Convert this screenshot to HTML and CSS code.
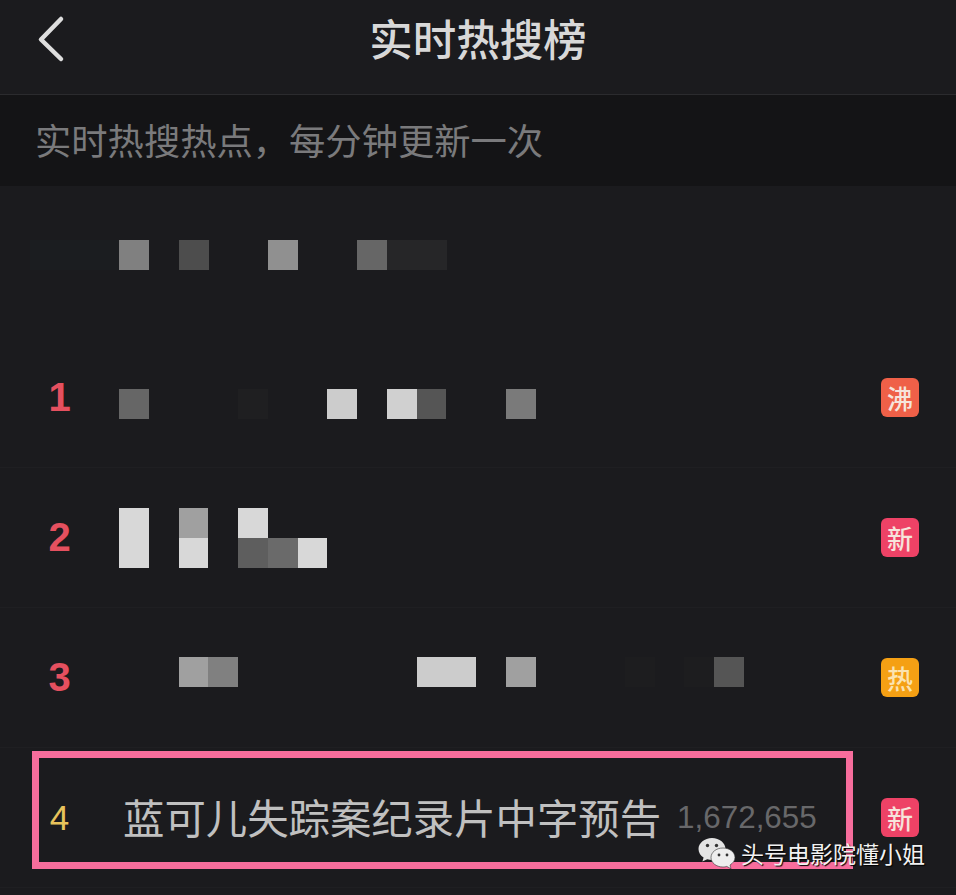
FILE: index.html
```html
<!DOCTYPE html>
<html lang="zh-CN">
  <head>
    <meta charset="UTF-8" />
    <meta name="viewport" content="width=device-width, initial-scale=1.0" />
    <title>实时热搜榜</title>
    <link rel="stylesheet" href="styles.css">
  </head>
  <body>
    <div class="page">
      <div class="header">
        <svg class="back" width="30" height="48" viewBox="0 0 30 48">
          <path d="M25 4 L5 24.5 L25 44" />
        </svg>
        <h1>实时热搜榜</h1>
      </div>

      <div class="notice">实时热搜热点，每分钟更新一次</div>

      <!-- pinned row, no rank -->
      <div class="row row-pinned">
        <div class="mosaic mosaic-pinned">
          <i class="t-blue"></i><i class="t-blue"></i><i class="t-blue"></i>
          <i class="t-808"></i><i></i><i class="t-4d"></i><i></i><i></i><i class="t-90"></i><i></i><i></i><i class="t-66"></i><i class="t-2a"></i><i class="t-2a"></i>
        </div>
      </div>

      <div class="row">
        <span class="rank">1</span>
        <div class="mosaic mosaic-low">
          <i class="t-66"></i><i></i><i></i><i></i><i class="t-21"></i><i></i><i></i><i class="t-cc"></i><i></i><i class="t-d0"></i><i class="t-55"></i><i></i><i></i><i class="t-7a"></i>
        </div>
        <span class="badge badge-boil">沸</span>
      </div>

      <div class="row">
        <span class="rank">2</span>
        <div class="mosaic mosaic-two">
          <i class="t-d8 tall"></i><i></i><i class="t-a0"></i><i></i><i class="t-d8"></i><i></i><i></i>
          <i></i><i class="t-d8"></i><i></i><i class="t-5e"></i><i class="t-6a"></i><i class="t-d8"></i>
        </div>
        <span class="badge badge-new">新</span>
      </div>

      <div class="row">
        <span class="rank">3</span>
        <div class="mosaic mosaic-high">
          <i></i><i></i><i class="t-a0"></i><i class="t-808"></i><i></i><i></i><i></i><i></i><i></i><i></i><i class="t-cc"></i><i class="t-cc"></i><i></i><i class="t-a0"></i><i></i><i></i><i></i><i class="t-1f"></i><i></i><i class="t-1f"></i><i class="t-55"></i>
        </div>
        <span class="badge badge-hot">热</span>
      </div>

      <div class="row">
        <span class="rank rank-plain">4</span>
        <span class="topic">蓝可儿失踪案纪录片中字预告</span>
        <span class="count">1,672,655</span>
        <span class="badge badge-new">新</span>
      </div>

      <!-- annotation and watermark sit on top of the screenshot -->
      <div class="highlight"></div>
      <div class="watermark">
        <svg width="38" height="33" viewBox="0 0 38 33">
          <path class="bubble-back" d="M14 1 C6.5 1 0.5 6 0.5 12 C0.5 15.6 2.6 18.6 5.6 20.6 L4.4 24.6 L9.2 22.2 C11 22.7 12.6 23 14 23 C21.6 23 27.5 18 27.5 12 C27.5 6 21.6 1 14 1 Z" />
          <path class="bubble-front" d="M25 11 C18 11 13 15.4 13 20.5 C13 25.6 18 30 25 30 C26.4 30 27.6 29.8 28.8 29.4 L33 31.8 L32 28 C35 26.2 37 23.5 37 20.5 C37 15.4 32 11 25 11 Z" />
          <circle class="eye" cx="9.5" cy="8.5" r="1.7" />
          <circle class="eye" cx="18.5" cy="8.5" r="1.7" />
          <circle class="eye" cx="21" cy="18" r="1.4" />
          <circle class="eye" cx="29" cy="18" r="1.4" />
        </svg>
        <span>头号电影院懂小姐</span>
      </div>
    </div>
  </body>
</html>
```

FILE: styles.css
```css
* {
  margin: 0;
  padding: 0;
  box-sizing: border-box;
}

body {
  background-color: #1b1b1e;
  color: #d8d8d8;
  font-family: "Noto Sans CJK SC", "Liberation Sans", sans-serif;
}

.page {
  position: relative;
  width: 956px;
  height: 895px;
  overflow: hidden;
}

/* Header */
.header {
  position: relative;
  height: 95px;
  display: flex;
  align-items: center;
  justify-content: center;
  border-bottom: 1px solid #2b2b2e;
  padding-bottom: 19px;
}

.header h1 {
  font-size: 43.5px;
  font-weight: 500;
  line-height: 60px;
  color: #d8d8d8;
}

.back {
  position: absolute;
  left: 36px;
  top: 15px;
}

.back path {
  fill: none;
  stroke: #dedede;
  stroke-width: 4.5;
  stroke-linecap: round;
  stroke-linejoin: round;
}

.notice {
  height: 91px;
  background-color: #141416;
  padding-left: 35px;
  padding-bottom: 4px;
  display: flex;
  align-items: center;
  font-size: 36.3px;
  color: #7a7a7c;
}

/* Rows */
.row {
  height: 140px;
  display: flex;
  align-items: center;
  padding-right: 37px;
  border-bottom: 1px solid #1f1f22;
}

.row-pinned {
  height: 142px;
  padding-left: 30px;
  padding-bottom: 4px;
  border-bottom: none;
}

.rank {
  width: 119px;
  flex: none;
  text-align: center;
  font-family: "Liberation Sans", sans-serif;
  font-size: 40px;
  font-weight: bold;
  color: #e5505f;
}

.rank-plain {
  font-size: 35px;
  font-weight: normal;
  color: #e8c35c;
}

.badge {
  width: 38px;
  height: 39px;
  flex: none;
  margin-left: auto;
  border-radius: 6px;
  display: flex;
  align-items: center;
  justify-content: center;
  font-size: 26px;
  font-weight: 500;
  color: #f6e4dc;
}

.badge-boil {
  background-color: #ef6048;
}

.badge-new {
  background-color: #ee4266;
}

.badge-hot {
  background-color: #f5a014;
  color: #fbe3b0;
}

/* Censored titles */
.mosaic {
  display: grid;
  grid-template-columns: repeat(21, 29.75px);
  grid-auto-rows: 30px;
}

.mosaic-pinned {
  grid-template-columns: repeat(14, 29.75px);
}

.mosaic-two {
  grid-template-columns: repeat(7, 29.75px);
}

.mosaic-low {
  margin-top: 12px;
}

.mosaic-high {
  margin-bottom: 12px;
}

.tall {
  grid-row: span 2;
}

.t-blue { background-color: #1b1d20; }
.t-1f { background-color: #1d1d1f; }
.t-21 { background-color: #1f1f21; }
.t-2a { background-color: #262628; }
.t-4d { background-color: #4d4d4d; }
.t-55 { background-color: #555555; }
.t-5e { background-color: #5e5e5e; }
.t-66 { background-color: #666666; }
.t-6a { background-color: #6a6a6a; }
.t-7a { background-color: #7a7a7a; }
.t-808 { background-color: #808080; }
.t-90 { background-color: #909090; }
.t-a0 { background-color: #a0a0a0; }
.t-cc { background-color: #cccccc; }
.t-d0 { background-color: #d0d0d0; }
.t-d8 { background-color: #d8d8d8; }

/* Row 4 */
.topic {
  padding-left: 4px;
  padding-bottom: 4px;
  font-size: 41.4px;
  line-height: 56px;
  color: #c0c0c0;
  white-space: nowrap;
}

.count {
  margin-left: 16px;
  font-family: "Liberation Sans", sans-serif;
  font-size: 31.4px;
  color: #68686a;
}

.highlight {
  position: absolute;
  left: 32px;
  top: 751px;
  width: 821px;
  height: 118px;
  border: 7px solid #f76d9c;
}

.watermark {
  position: absolute;
  left: 698px;
  top: 836px;
  display: flex;
  align-items: center;
  gap: 5px;
  font-size: 23px;
  color: #f2f2f2;
  text-shadow: 1px 1px 1px #000;
}

.bubble-back {
  fill: #e4e4e4;
}

.bubble-front {
  fill: #eeeeee;
  stroke: #333;
  stroke-width: 0.6;
}

.eye {
  fill: #333;
}
```
